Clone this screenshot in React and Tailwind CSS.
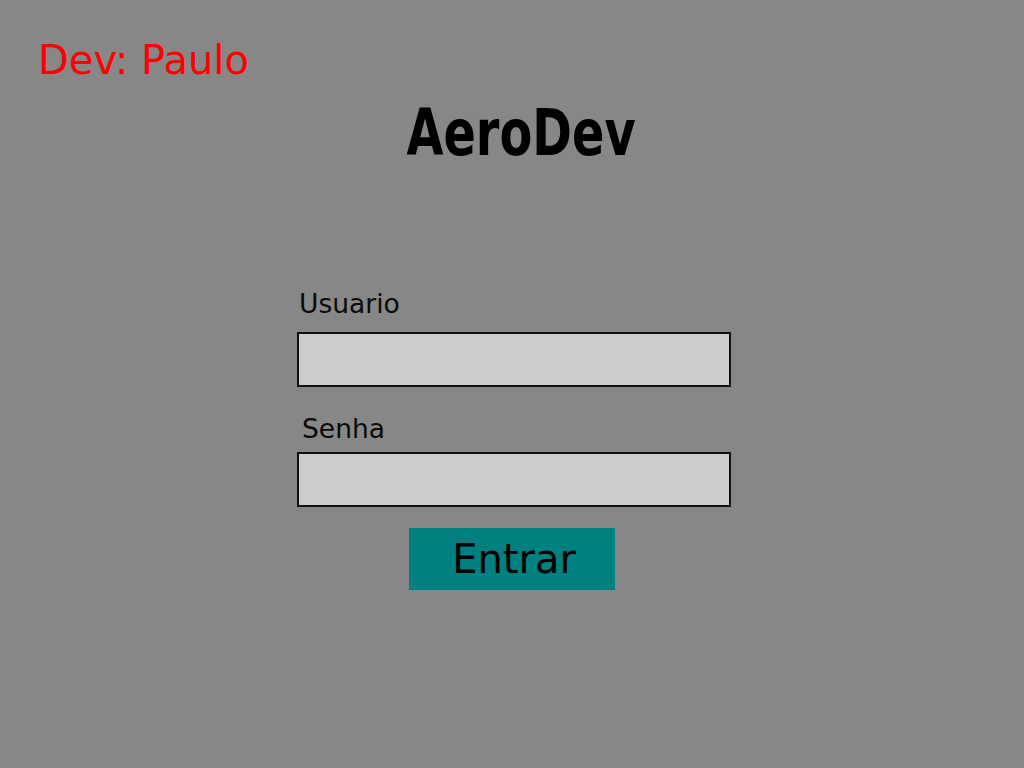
import React, { useState } from "react";

const App = () => {
  const [usuario, setUsuario] = useState("");
  const [senha, setSenha] = useState("");

  return (
    <div className="min-h-screen bg-[#878787] font-['DejaVu_Sans',sans-serif]">
      <div className="pt-[37px] pl-[38px] text-[40px] leading-[46px] text-[#ff0000]">Dev: Paulo</div>
      <div className="mt-[13px] flex justify-center pl-[18px]">
        <h1 className="inline-block scale-x-[0.83] font-['DejaVu_Sans_Condensed','DejaVu_Sans',sans-serif] font-bold text-[64px] leading-[75px] text-black">
          AeroDev
        </h1>
      </div>
      <form className="mx-auto mt-[118px] w-[438px] pl-[4px] flex flex-col" onSubmit={(e) => e.preventDefault()}>
        <label className="pl-[2px] text-[26.5px] leading-[30px] text-[#0a0a0a]">Usuario</label>
        <input
          value={usuario}
          onChange={(e) => setUsuario(e.target.value)}
          className="mt-[13px] h-[55px] w-full border-2 border-[#111] bg-[#cccccc] outline-none"
        />
        <label className="mt-[27px] pl-[5px] text-[26.5px] leading-[30px] text-[#0a0a0a]">Senha</label>
        <input
          type="password"
          value={senha}
          onChange={(e) => setSenha(e.target.value)}
          className="mt-[8px] h-[55px] w-full border-2 border-[#111] bg-[#cccccc] outline-none"
        />
        <button
          type="submit"
          className="mt-[21px] ml-[112px] h-[62px] w-[206px] pl-[4px] bg-[#008080] text-[40px] leading-[46px] text-black"
        >
          Entrar
        </button>
      </form>
    </div>
  );
};

export default App;
